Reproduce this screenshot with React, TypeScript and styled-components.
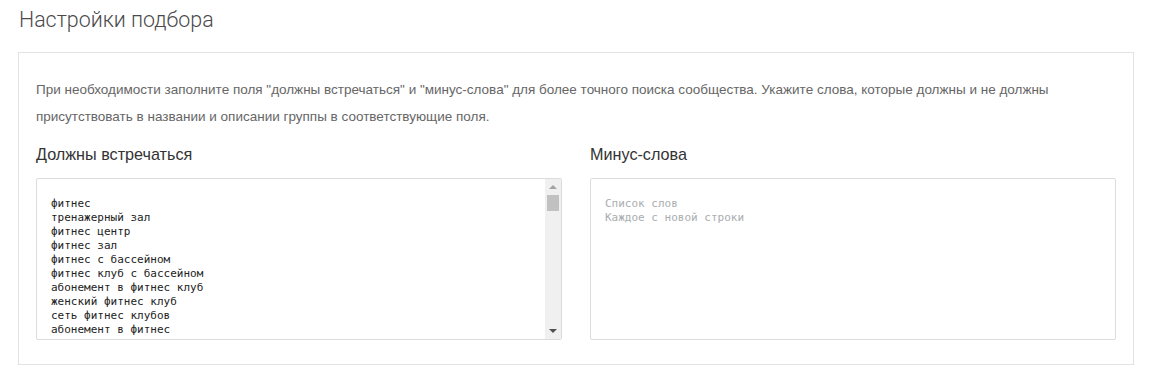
import React from "react";
import styled, { createGlobalStyle } from "styled-components";

const GlobalStyle = createGlobalStyle`
  body {
    margin: 0;
    background: #fff;
    font-family: "Liberation Sans", Arial, sans-serif;
  }
`;

const included = [
  "фитнес",
  "тренажерный зал",
  "фитнес центр",
  "фитнес зал",
  "фитнес с бассейном",
  "фитнес клуб с бассейном",
  "абонемент в фитнес клуб",
  "женский фитнес клуб",
  "сеть фитнес клубов",
  "абонемент в фитнес",
  "спортзал",
  "тренажерный зал рядом",
  "фитнес клуб",
  "йога",
  "пилатес",
  "кроссфит",
  "персональный тренер",
].join("\n");

const Page = styled.main`
  padding: 6px 16px 9px 18px;
`;

const Title = styled.h1`
  margin: 0 0 19px 1px;
  font-family: Roboto, "Liberation Sans", sans-serif;
  font-weight: 300;
  font-size: 21.4px;
  line-height: 27px;
  color: #4a4a4a;
`;

const Panel = styled.section`
  border: 1px solid #e3e3e3;
  padding: 23px 17px 24px;
`;

const Description = styled.p`
  margin: 0 0 14px;
  font-size: 13.5px;
  line-height: 27px;
  color: #666;
`;

const Columns = styled.div`
  display: grid;
  grid-template-columns: 1fr 1fr;
  column-gap: 28px;
`;

const Field = styled.div`
  display: flex;
  flex-direction: column;
`;

const Label = styled.label`
  margin: 0 0 14px;
  font-size: 16.2px;
  line-height: 20px;
  color: #333;
`;

const Frame = styled.div`
  display: flex;
  height: 162px;
  box-sizing: border-box;
  border: 1px solid #dcdcdc;
  border-radius: 2px;
  overflow: hidden;
  background: #fff;
`;

const Words = styled.textarea`
  flex: 1;
  min-width: 0;
  margin: 0;
  padding: 18px 14px;
  border: 0;
  resize: none;
  outline: none;
  overflow: hidden;
  font-family: "DejaVu Sans Mono", monospace;
  font-size: 11px;
  line-height: 14px;
  color: #222;
  background: transparent;

  &::placeholder {
    color: #a9adb1;
  }
`;

const Scrollbar = styled.div`
  display: flex;
  flex-direction: column;
  width: 16px;
  flex: none;
  background: #f0f0f0;
`;

const Arrow = styled.div<{ $down?: boolean }>`
  display: flex;
  align-items: center;
  justify-content: center;
  height: 16px;

  &::before {
    content: "";
    border-left: 4px solid transparent;
    border-right: 4px solid transparent;
    ${(p) =>
      p.$down ? "border-top: 4px solid #505050;" : "border-bottom: 4px solid #a3a3a3;"}
  }
`;

const Track = styled.div`
  flex: 1;
  padding: 0 2px;
`;

const Thumb = styled.div`
  height: 16px;
  background: #c1c1c1;
`;

const App = () => {
  return (
    <Page>
      <GlobalStyle />
      <Title>Настройки подбора</Title>
      <Panel>
        <Description>
          При необходимости заполните поля "должны встречаться" и "минус-слова" для более точного
          поиска сообщества. Укажите слова, которые должны и не должны присутствовать в названии и
          описании группы в соответствующие поля.
        </Description>
        <Columns>
          <Field>
            <Label>Должны встречаться</Label>
            <Frame>
              <Words defaultValue={included} spellCheck={false} />
              <Scrollbar>
                <Arrow />
                <Track>
                  <Thumb />
                </Track>
                <Arrow $down />
              </Scrollbar>
            </Frame>
          </Field>
          <Field>
            <Label>Минус-слова</Label>
            <Frame>
              <Words placeholder={"Список слов\nКаждое с новой строки"} spellCheck={false} />
            </Frame>
          </Field>
        </Columns>
      </Panel>
    </Page>
  );
};

export default App;
